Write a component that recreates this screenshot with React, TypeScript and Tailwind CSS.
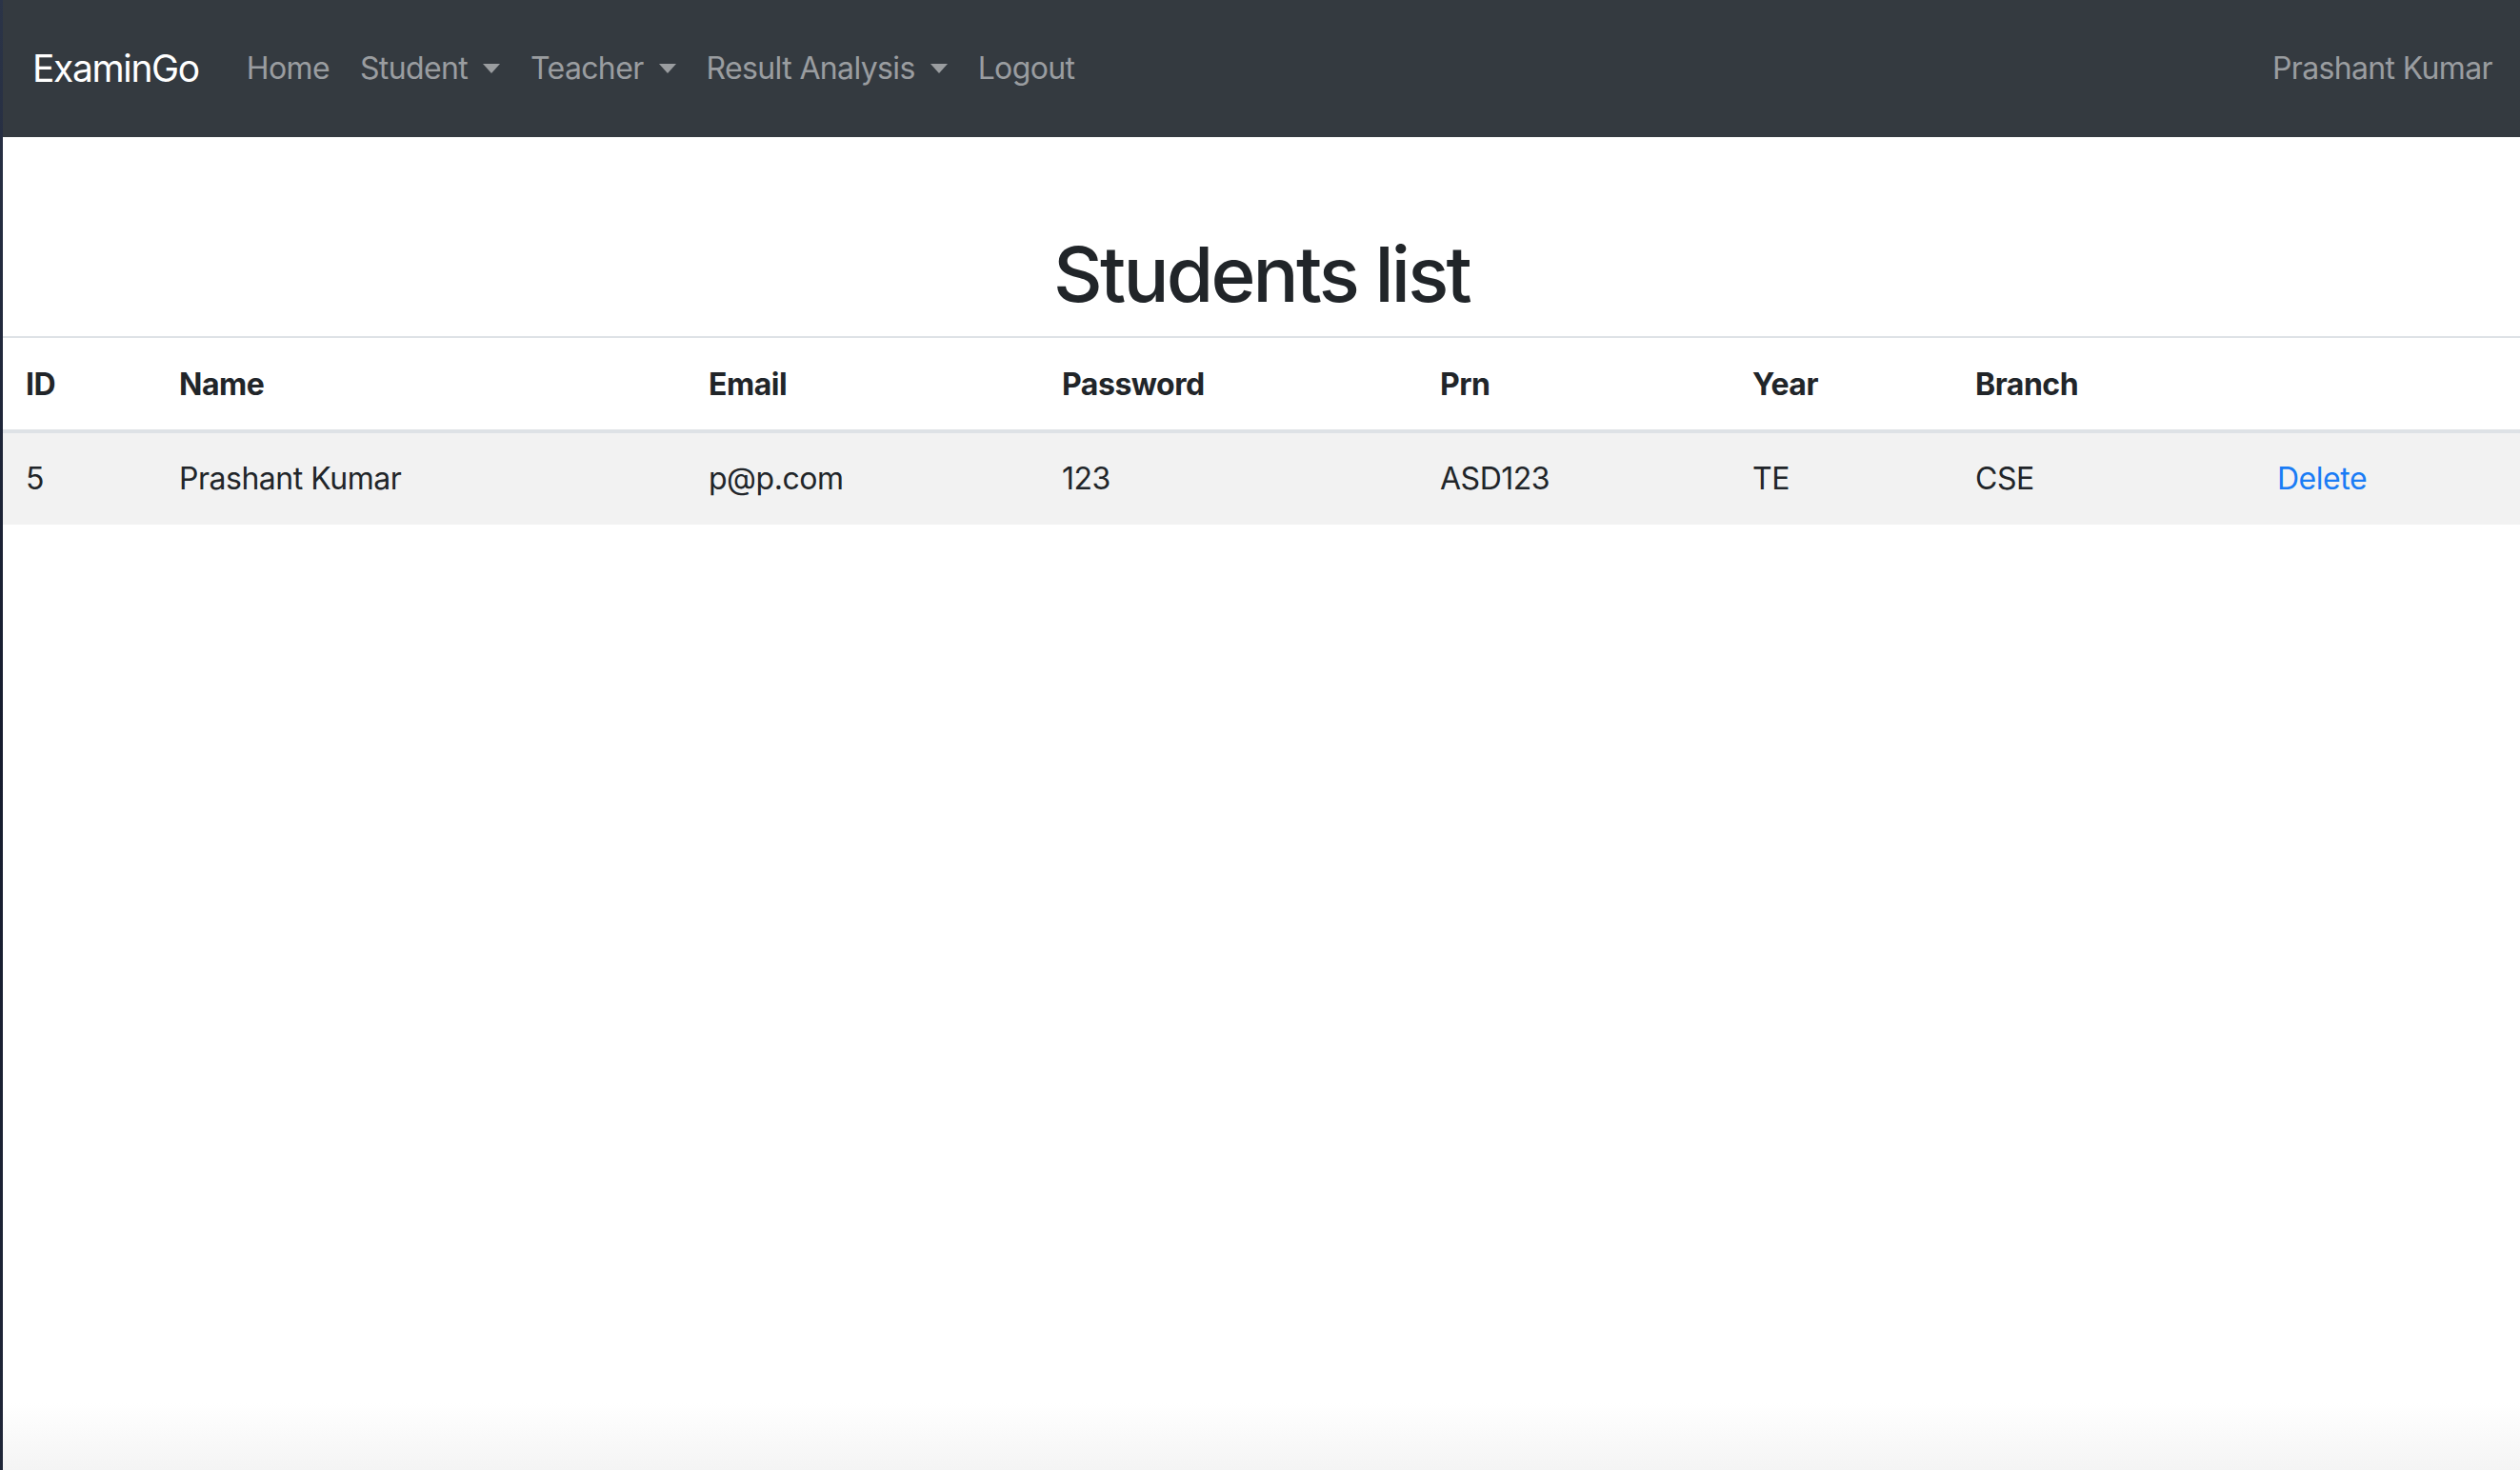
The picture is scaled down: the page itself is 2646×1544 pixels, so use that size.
type Student = {
  id: number
  name: string
  email: string
  password: string
  prn: string
  year: string
  branch: string
}

const students: Student[] = [
  { id: 5, name: 'Prashant Kumar', email: 'p@p.com', password: '123', prn: 'ASD123', year: 'TE', branch: 'CSE' },
]

const columns = [
  { label: 'ID', width: 'w-[161px]' },
  { label: 'Name', width: 'w-[556px]' },
  { label: 'Email', width: 'w-[371px]' },
  { label: 'Password', width: 'w-[397px]' },
  { label: 'Prn', width: 'w-[328px]' },
  { label: 'Year', width: 'w-[234px]' },
  { label: 'Branch', width: 'w-[317px]' },
  { label: '', width: 'w-[279px]' },
]

function Caret() {
  return <span className="ml-[16px] inline-block h-0 w-0 border-x-[9px] border-t-[10px] border-x-transparent border-t-[#9a9da0] align-[6px]" />
}

function NavLink({ label, dropdown }: { label: string; dropdown?: boolean }) {
  return (
    <a href="#" className="px-4 text-[32px] leading-[48px] tracking-[-0.02em] text-[#9a9da0]">
      {label}
      {dropdown && <Caret />}
    </a>
  )
}

function Navbar() {
  return (
    <nav className="flex h-[144px] items-center justify-between bg-[#343a40] pl-[31px] pr-[29px]">
      <div className="flex items-center">
        <a href="#" className="mr-[34px] text-[39px] leading-[60px] tracking-[-0.035em] text-white">ExaminGo</a>
        <div className="flex items-center">
          <NavLink label="Home" />
          <NavLink label="Student" dropdown />
          <NavLink label="Teacher" dropdown />
          <NavLink label="Result Analysis" dropdown />
          <NavLink label="Logout" />
        </div>
      </div>
      <span className="text-[32px] leading-[48px] tracking-[-0.02em] text-[#9a9da0]">Prashant Kumar</span>
    </nav>
  )
}

export default function App() {
  return (
    <div className="flex min-h-screen bg-white font-['Inter','Noto_Sans',sans-serif] text-[#212529]">
      <div className="w-[3px] shrink-0 bg-gradient-to-b from-[#2b3448] via-[#161c2e] to-[#1f2638]" />
      <div className="flex min-w-0 flex-1 flex-col">
        <Navbar />
        <main className="flex-1">
          <h1 className="mt-[96px] mb-[17px] text-center text-[80px] font-medium leading-[96px] tracking-[-0.035em]">Students list</h1>
          <table className="w-full table-fixed border-collapse text-left text-[32px] leading-[48px] tracking-[-0.015em]">
            <thead>
              <tr>
                {columns.map((c, i) => (
                  <th
                    key={i}
                    className={`${c.width} border-t-2 border-b-4 border-[#dee2e6] px-6 pt-[25px] pb-[23px] font-bold`}
                  >
                    {c.label}
                  </th>
                ))}
              </tr>
            </thead>
            <tbody>
              {students.map((s) => (
                <tr key={s.id} className="bg-[#f2f2f2]">
                  <td className="px-6 py-6">{s.id}</td>
                  <td className="px-6 py-6">{s.name}</td>
                  <td className="px-6 py-6">{s.email}</td>
                  <td className="px-6 py-6">{s.password}</td>
                  <td className="px-6 py-6">{s.prn}</td>
                  <td className="px-6 py-6">{s.year}</td>
                  <td className="px-6 py-6">{s.branch}</td>
                  <td className="px-6 py-6">
                    <a href="#" className="text-[#1a7cf5]">Delete</a>
                  </td>
                </tr>
              ))}
            </tbody>
          </table>
        </main>
        <div className="h-[70px] bg-gradient-to-b from-white to-[#f4f4f4]" />
      </div>
    </div>
  )
}
